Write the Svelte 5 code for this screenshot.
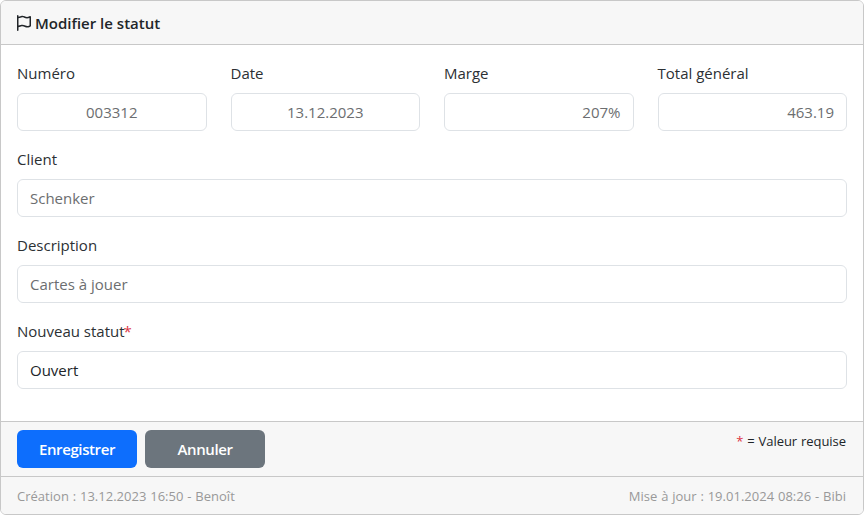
<script>
  const summary = [
    { label: 'Numéro', value: '003312', align: 'center' },
    { label: 'Date', value: '13.12.2023', align: 'center' },
    { label: 'Marge', value: '207%', align: 'end' },
    { label: 'Total général', value: '463.19', align: 'end' },
  ];
</script>

<div class="card">
  <header class="card-header">
    <svg class="flag" viewBox="0 0 448 512" aria-hidden="true">
      <path fill="currentColor" d="M48 24C48 10.7 37.3 0 24 0S0 10.7 0 24V64 350.5 400v88c0 13.3 10.7 24 24 24s24-10.7 24-24V388l80.3-20.1c41.1-10.3 84.6-5.5 122.5 13.4c44.2 22.1 95.5 24.8 141.7 7.4l34.7-13c12.5-4.7 20.8-16.6 20.8-30V66.1c0-23-24.2-38-44.8-27.7l-9.6 4.8c-46.3 23.2-100.8 23.2-147.1 0c-35.1-17.6-75.4-22-113.5-12.5L48 52V24zm0 77.5l96.6-24.2c27-6.7 55.5-3.6 80.4 8.8c54.9 27.4 118.7 29.7 175 6.8V334.7l-24.4 9.1c-33.7 12.6-71.2 10.7-103.4-5.4c-48.2-24.1-103.3-30.1-155.6-17.1L48 338.5v-237z" />
    </svg>
    <span class="title">Modifier le statut</span>
  </header>

  <div class="card-body">
    <div class="row">
      {#each summary as item}
        <div class="field">
          <div class="label"><span>{item.label}</span></div>
          <div class="control {item.align}"><span>{item.value}</span></div>
        </div>
      {/each}
    </div>
    <div class="field">
      <div class="label"><span>Client</span></div>
      <div class="control"><span>Schenker</span></div>
    </div>
    <div class="field">
      <div class="label"><span>Description</span></div>
      <div class="control"><span>Cartes à jouer</span></div>
    </div>
    <div class="field">
      <div class="label"><span>Nouveau statut</span><span class="required">*</span></div>
      <div class="control editable"><span>Ouvert</span></div>
    </div>
  </div>

  <div class="actions">
    <button class="btn primary">Enregistrer</button>
    <button class="btn secondary">Annuler</button>
    <div class="note"><span class="required">*</span> = Valeur requise</div>
  </div>

  <footer class="meta">
    <span class="created">Création : 13.12.2023 16:50 - Benoît</span>
    <span class="updated">Mise à jour : 19.01.2024 08:26 - Bibi</span>
  </footer>
</div>

<style>
  :global(body) {
    margin: 0;
    background: #fff;
  }
  .card {
    box-sizing: border-box;
    height: 515px;
    display: flex;
    flex-direction: column;
    border: 1px solid #c8c8c8;
    border-radius: 6px;
    overflow: hidden;
    background: #fff;
    color: #212529;
    font: 400 15px/24px "Open Sans", "Noto Sans", sans-serif;
  }
  .card-header {
    display: flex;
    align-items: center;
    gap: 4px;
    height: 43px;
    padding: 0 16px;
    background: #f7f7f7;
    border-bottom: 1px solid #c8c8c8;
  }
  .flag {
    width: 14px;
    height: 16px;
  }
  .title {
    font-weight: 600;
  }
  .card-body {
    flex: 1;
    padding: 16px 16px 0;
  }
  .row {
    display: grid;
    grid-template-columns: repeat(4, 1fr);
    gap: 24px;
  }
  .field {
    margin-bottom: 16px;
  }
  .row .field {
    min-width: 0;
  }
  .label {
    margin-bottom: 8px;
    color: #2c3034;
  }
  .label .required {
    margin-left: -1px;
  }
  .required {
    color: #dc3545;
  }
  .control {
    box-sizing: border-box;
    height: 38px;
    display: flex;
    align-items: center;
    padding: 0 12px;
    border: 1px solid #dee2e6;
    border-radius: 6px;
    color: #6c6e70;
  }
  .center {
    justify-content: center;
  }
  .end {
    justify-content: flex-end;
  }
  .editable {
    color: #212529;
  }
  .actions {
    box-sizing: border-box;
    display: flex;
    gap: 8px;
    height: 55px;
    padding: 8px 16px;
    background: #f7f7f7;
    border-top: 1px solid #c8c8c8;
  }
  .btn {
    width: 120px;
    height: 38px;
    padding: 0;
    border: 0;
    border-radius: 6px;
    color: #fff;
    font: 600 15px/24px "Open Sans", "Noto Sans", sans-serif;
    letter-spacing: -0.4px;
  }
  .primary {
    background: #0d6efd;
  }
  .secondary {
    background: #6c757d;
  }
  .note {
    margin-left: auto;
    padding-right: 1px;
    font-size: 13px;
    line-height: 23px;
    letter-spacing: -0.04px;
    word-spacing: 0.5px;
  }
  .meta {
    box-sizing: border-box;
    height: 38px;
    display: flex;
    justify-content: space-between;
    align-items: center;
    padding: 0 17px 0 16px;
    background: #f7f7f7;
    border-top: 1px solid #c8c8c8;
    color: #999;
    font-size: 13px;
    letter-spacing: 0.02px;
    word-spacing: 0.4px;
  }
</style>
